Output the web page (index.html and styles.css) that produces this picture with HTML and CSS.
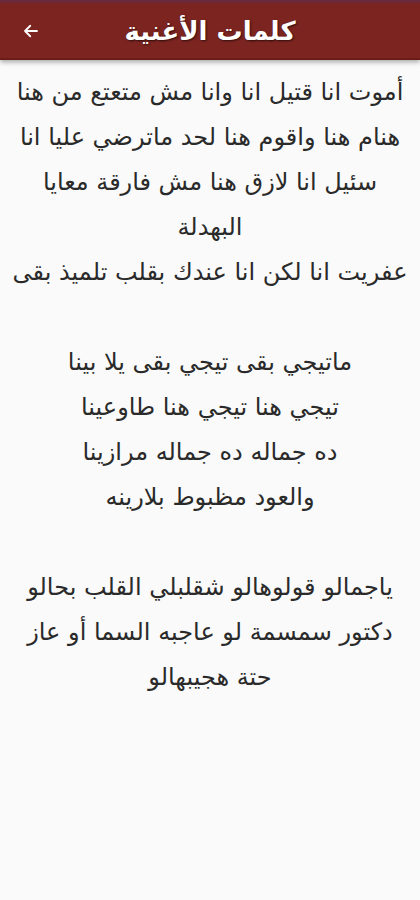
FILE: index.html
```html
<!DOCTYPE html>
<html lang="ar" dir="rtl">
<head>
    <meta charset="UTF-8">
    <meta name="viewport" content="width=device-width, initial-scale=1.0">
    <title>كلمات الأغنية</title>
    <link rel="stylesheet" href="styles.css">
</head>
<body>
    <div class="header">
        <div class="title">كلمات الأغنية</div>
        <div class="back">
            <svg width="18" height="18" viewBox="0 0 24 24">
                <path d="M20 12H5M11 5l-7 7 7 7" fill="none" stroke="#fff" stroke-width="2.4" stroke-linecap="round" stroke-linejoin="round"/>
            </svg>
        </div>
    </div>
    <div class="lyrics">
        <p>أموت انا قتيل انا وانا مش متعتع من هنا</p>
        <p>هنام هنا واقوم هنا لحد ماترضي عليا انا</p>
        <p>سئيل انا لازق هنا مش فارقة معايا البهدلة</p>
        <p>عفريت انا لكن انا عندك بقلب تلميذ بقى</p>
        <p class="gap"></p>
        <p>ماتيجي بقى تيجي بقى يلا بينا</p>
        <p>تيجي هنا تيجي هنا طاوعينا</p>
        <p>ده جماله ده جماله مرازينا</p>
        <p>والعود مظبوط بلارينه</p>
        <p class="gap"></p>
        <p>ياجمالو قولوهالو شقلبلي القلب بحالو</p>
        <p>دكتور سمسمة لو عاجبه السما أو عاز حتة هجيبهالو</p>
    </div>
</body>
</html>
```

FILE: styles.css
```css
* {
    padding: 0;
    margin: 0;
    box-sizing: border-box;
}
body {
    background: #fafafa;
    font-family: "DejaVu Sans", "Noto Sans", sans-serif;
    color: #2a2a2a;
    min-height: 900px;
}
.header {
    position: relative;
    height: 60px;
    background: #7b2420;
    border-top: 3px solid #6a2a3c;
    border-bottom: 2px solid #6b1b18;
    box-shadow: 0 2px 5px rgba(0, 0, 0, 0.35);
    display: flex;
    align-items: center;
    justify-content: center;
}
.title {
    color: #fff;
    font-size: 26px;
    font-weight: bold;
    text-shadow: 1px 1px 2px rgba(0, 0, 0, 0.6);
}
.back {
    position: absolute;
    left: 22px;
    top: 19px;
    width: 18px;
    height: 18px;
}
.lyrics {
    padding: 10px 12px 0;
    text-align: center;
}
.lyrics p {
    font-size: 24px;
    line-height: 45px;
    min-height: 45px;
}
```
